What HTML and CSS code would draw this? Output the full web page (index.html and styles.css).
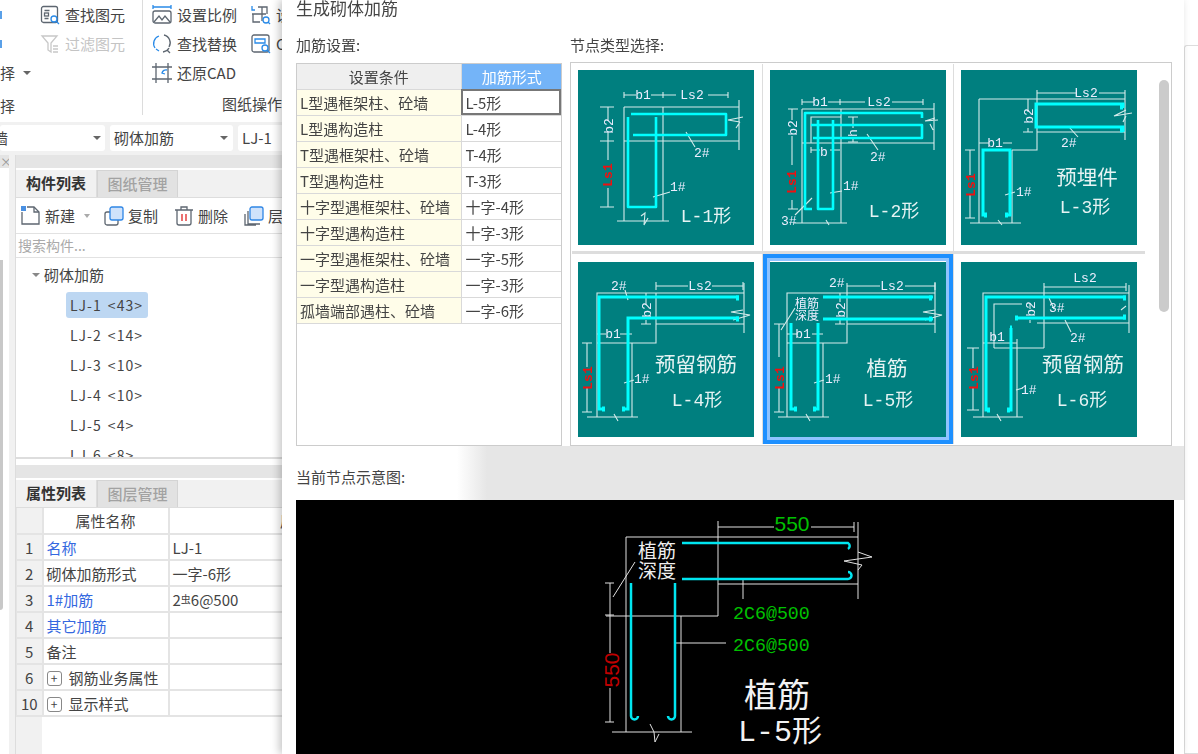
FILE: index.html
```html
<!DOCTYPE html>
<html lang="zh">
<head>
<meta charset="utf-8">
<title>生成砌体加筋</title>
<link rel="stylesheet" href="styles.css">
</head>
<body>
<div class="page">
  <aside class="app">
    <div class="ribbon">
      <div class="rib-edge">
        <div class="rib-row"><span class="edge-mark"></span></div>
        <div class="rib-row"><span class="edge-mark"></span></div>
        <div class="rib-row">择<span class="caret rib-caret"></span></div>
        <div class="rib-group-label left">择</div>
      </div>
      <div class="rib-find">
        <div class="rib-row">
          <svg class="ico" viewBox="0 0 20 20"><rect class="i-g" x="1.500" y="1.500" width="16" height="16" rx="2"/><path class="i-g" d="M4.500 5.500h5M4.500 13.500h4"/><rect class="i-g" x="4.500" y="8" width="4" height="3"/><circle class="i-b" cx="14" cy="14" r="3"/><path class="i-b" d="M16 16l3 3"/></svg>
          <span>查找图元</span>
        </div>
        <div class="rib-row muted">
          <svg class="ico" viewBox="0 0 20 20"><path class="i-l" d="M2 2h15l-6 7v9l-3-2V9z"/><path class="i-l" d="M13 12h5M13 15h5M13 18h5"/></svg>
          <span>过滤图元</span>
        </div>
      </div>
      <div class="rib-cad">
        <div class="rib-cols">
          <div class="rib-col3">
            <div class="rib-row">
              <svg class="ico" viewBox="0 0 20 20"><path class="i-b" d="M1 2h18M1 0v4M19 0v4"/><rect class="i-g" x="1" y="6" width="18" height="12" rx="2"/><path class="i-g" d="M2 17l5-6 3 4 3-4 5 6"/></svg>
              <span>设置比例</span>
            </div>
            <div class="rib-row">
              <svg class="ico" viewBox="0 0 20 20"><path class="i-b" d="M3 14a8 8 0 0 1 4-12M4 15l3 2"/><path class="i-g" d="M12 1a8 8 0 0 1 5 12M11 18a8 8 0 0 0 6-4M15 16l3 3"/></svg>
              <span>查找替换</span>
            </div>
            <div class="rib-row">
              <svg class="ico" viewBox="0 0 20 20"><path class="i-g" d="M0 4h20M0 16h20M4 0v20M16 0v20"/><path class="i-b" d="M15 7a4 4 0 0 0-5 3l3 1"/></svg>
              <span>还原CAD</span>
            </div>
          </div>
          <div class="rib-col4">
            <div class="rib-row">
              <svg class="ico" viewBox="0 0 20 20"><path class="i-b" d="M1 1v4h3"/><path class="i-g" d="M7 2h9v7M11 2v14M1 9h14M2 9v8h7"/><circle class="i-b" cx="15" cy="15" r="3"/><path class="i-b" d="M17 17l2 2"/></svg>
              <span>设置</span>
            </div>
            <div class="rib-row">
              <svg class="ico" viewBox="0 0 20 20"><rect class="i-g" x="1" y="1" width="17" height="17" rx="2"/><path class="i-b" d="M4 5h10v4H4z"/><circle class="i-b" cx="14" cy="14" r="3"/><path class="i-b" d="M16 16l3 3"/></svg>
              <span>CAD</span>
            </div>
          </div>
        </div>
        <div class="rib-group-label">图纸操作</div>
      </div>
    </div>

    <div class="selectors">
      <div class="select sel-a"><span class="sel-cut">墙</span><i class="caret"></i></div>
      <div class="select sel-b"><span>砌体加筋</span><i class="caret"></i></div>
      <div class="select sel-c"><span>LJ-1</span></div>
    </div>

    <div class="workspace">
      <div class="strip">
        <div class="strip-head">×</div>
        <div class="strip-thumb"></div>
      </div>
      <div class="panels">
        <div class="pane-head"></div>
        <div class="tabs">
          <div class="tab active">构件列表</div>
          <div class="tab">图纸管理</div>
        </div>
        <div class="tools">
          <span class="tool">
            <svg class="ico" viewBox="0 0 20 20"><path class="i-g" d="M1 6v12h17V6l-5-5H6"/><path class="i-g" d="M13 1v5h5"/><rect class="i-fill" x="0" y="0" width="5" height="5"/></svg>新建<i class="caret tool-caret"></i>
          </span>
          <span class="tool">
            <svg class="ico" viewBox="0 0 20 20"><rect class="i-g" x="1" y="6" width="13" height="13" rx="2"/><rect class="i-box" x="6" y="1" width="13" height="13" rx="2"/></svg>复制
          </span>
          <span class="tool">
            <svg class="ico" viewBox="0 0 20 20"><path class="i-g" d="M1 4h18M7 4V1h6v3M3 4v13a2 2 0 0 0 2 2h10a2 2 0 0 0 2-2V4"/><path class="i-r" d="M8 8v7M12 8v7"/></svg>删除
          </span>
          <span class="tool">
            <svg class="ico" viewBox="0 0 20 20"><path class="i-g" d="M4 5v13h12M1 8v11h11"/><rect class="i-box" x="6" y="1" width="13" height="13" rx="2"/></svg>层
          </span>
        </div>
        <div class="search">搜索构件...</div>
        <div class="tree">
          <div class="tree-root"><i class="caret tree-caret"></i>砌体加筋</div>
          <div class="tree-item selected">LJ-1 &lt;43&gt;</div>
          <div class="tree-item">LJ-2 &lt;14&gt;</div>
          <div class="tree-item">LJ-3 &lt;10&gt;</div>
          <div class="tree-item">LJ-4 &lt;10&gt;</div>
          <div class="tree-item">LJ-5 &lt;4&gt;</div>
          <div class="tree-item">LJ-6 &lt;8&gt;</div>
        </div>
        <div class="pane-head second"></div>
        <div class="tabs">
          <div class="tab active">属性列表</div>
          <div class="tab">图层管理</div>
        </div>
        <div class="props-wrap">
          <table class="props">
            <colgroup><col class="c-n"><col class="c-k"><col class="c-v"></colgroup>
            <tr><th class="num"></th><th>属性名称</th><th>属性值</th></tr>
            <tr><td class="num">1</td><td class="link">名称</td><td>LJ-1</td></tr>
            <tr><td class="num">2</td><td>砌体加筋形式</td><td>一字-6形</td></tr>
            <tr><td class="num">3</td><td class="link">1#加筋</td><td>2<span class="steel">虫</span>6@500</td></tr>
            <tr><td class="num">4</td><td class="link">其它加筋</td><td></td></tr>
            <tr><td class="num">5</td><td>备注</td><td></td></tr>
            <tr><td class="num">6</td><td><span class="plus">+</span>钢筋业务属性</td><td></td></tr>
            <tr><td class="num">10</td><td><span class="plus">+</span>显示样式</td><td></td></tr>
          </table>
        </div>
      </div>
    </div>
  </aside>

  <main class="dialog">
    <div class="dlg-title">生成砌体加筋</div>
    <div class="dlg-top">
      <section class="cfg">
        <div class="label">加筋设置:</div>
        <div class="cfg-box">
          <table class="cfg-table">
            <colgroup><col class="c-cond"><col class="c-form"></colgroup>
            <tr><th>设置条件</th><th class="hl">加筋形式</th></tr>
            <tr><td>L型遇框架柱、砼墙</td><td class="cur">L-5形</td></tr>
            <tr><td>L型遇构造柱</td><td>L-4形</td></tr>
            <tr><td>T型遇框架柱、砼墙</td><td>T-4形</td></tr>
            <tr><td>T型遇构造柱</td><td>T-3形</td></tr>
            <tr><td>十字型遇框架柱、砼墙</td><td>十字-4形</td></tr>
            <tr><td>十字型遇构造柱</td><td>十字-3形</td></tr>
            <tr><td>一字型遇框架柱、砼墙</td><td>一字-5形</td></tr>
            <tr><td>一字型遇构造柱</td><td>一字-3形</td></tr>
            <tr><td>孤墙端部遇柱、砼墙</td><td>一字-6形</td></tr>
          </table>
        </div>
      </section>
      <section class="nodes">
        <div class="label node-label">节点类型选择:</div>
        <div class="node-box">
          <div class="node-grid">
            <div class="cell">
              <svg class="dg" viewBox="0 0 176 175">
                <path class="w" d="M46 37H161M46 71H161M46 37V151M85 37V151M161 30V80M39 151H91M162 52L150 50L165 47M162 52L158 58"/>
                <path class="w" d="M46 22V28M85 22V28M150 22V28M46 25H58M73 25H98M130 25H150M22 37H36M22 71H36M22 137H36M30 37V50M30 62V90M30 118V137"/>
                <path class="w" d="M63 146L67 143L66 155L70 148M75 127L92 122M108 62L117 77"/>
                <path class="c" d="M53 44H148V65H55M78 47V137H50V47"/>
                <text class="t" x="65" y="29" text-anchor="middle">b1</text><text class="t" x="114" y="29" text-anchor="middle">Ls2</text>
                <text class="t" x="92" y="121">1#</text><text class="t" x="116" y="87">2#</text>
                <text class="t" transform="translate(35 56) rotate(-90)" text-anchor="middle">b2</text>
                <text class="t red" transform="translate(34 105) rotate(-90)" text-anchor="middle">Ls1</text>
                <text class="cap" x="128" y="152" text-anchor="middle">L-1形</text>
              </svg>
            </div>
            <div class="cell">
              <svg class="dg" viewBox="0 0 176 175">
                <path class="w" d="M32 39H164M32 39V153M71 39V153M32 73H164M164 33V80M24 153H77M41 73V47H71M165 48L155 51L168 50M160 54L163 60"/>
                <path class="w" d="M32 29V35M70 29V35M153 29V35M32 32H44M58 32H95M122 32H153M18 39H28M22 39V50M22 66V95M22 130V139M18 139H28M78 47H88M78 72H88M83 47V58M83 68V72M41 77V83M41 80H50M60 80H70"/>
                <path class="w" d="M97 64L108 80M60 123L72 121M42 128L25 145M56 150L59 155"/>
                <path class="c" d="M42 139H35V43H152V48M41 55H152V68H43M48 50V139H63V50"/>
                <text class="t" x="50" y="36" text-anchor="middle">b1</text><text class="t" x="109" y="36" text-anchor="middle">Ls2</text>
                <text class="t" x="54" y="86" text-anchor="middle">b</text>
                <text class="t" x="73" y="120">1#</text><text class="t" x="100" y="91">2#</text><text class="t" x="11" y="155">3#</text>
                <text class="t" transform="translate(27 58) rotate(-90)" text-anchor="middle">b2</text>
                <text class="t" transform="translate(87 63) rotate(-90)" text-anchor="middle">h</text>
                <text class="t red" transform="translate(26 112) rotate(-90)" text-anchor="middle">Ls1</text>
                <text class="cap" x="124" y="147" text-anchor="middle">L-2形</text>
              </svg>
            </div>
            <div class="cell">
              <svg class="dg" viewBox="0 0 176 175">
                <path class="w" d="M18 29H164M18 29V153M51 80V153M51 80H76V62H164M76 20V62M164 20V70M9 153H60"/>
                <path class="w" d="M76 23H115M138 23H164M67 29V42M67 58V62M62 62H72M18 73H28M42 73H51M9 80V105M9 125V148M4 80H14M4 148H14M108 57L117 67M44 125L54 122M165 40L153 46L171 43M165 46L162 52M37 150L41 155"/>
                <path class="c1" d="M162 38V34H75V57H162V62M25 145H22V80H49V145H45"/>
                <path class="d" d="M159 37h3M159 60h3M23 145h3M44 145h3"/>
                <text class="t" x="34" y="77" text-anchor="middle">b1</text><text class="t" x="125" y="27" text-anchor="middle">Ls2</text>
                <text class="t" x="100" y="77">2#</text><text class="t" x="55" y="126">1#</text>
                <text class="t" transform="translate(72 46) rotate(-90)" text-anchor="middle">b2</text>
                <text class="t red" transform="translate(14 115) rotate(-90)" text-anchor="middle">Ls1</text>
                <text class="capz" x="126" y="115" text-anchor="middle">预埋件</text>
                <text class="cap" x="124" y="143" text-anchor="middle">L-3形</text>
              </svg>
            </div>
            <div class="cell">
              <svg class="dg" viewBox="0 0 176 175">
                <path class="w" d="M19 155V31H166M166 21V71M54 81V155M19 81H78V62H166M78 31V62M9 155H60"/>
                <path class="w" d="M78 24H110M134 24H165M78 20V28M165 20V28M68 31V42M68 58V62M63 62H73M19 72H28M42 72H54M9 81V105M9 125V150M4 81H14M4 150H14M46 121L56 118M47 28L50 38M165 48L153 50L172 53L155 58M36 152L40 159"/>
                <path class="c1" d="M161 35H21V147H25M161 56H50V147H46"/>
                <path class="d" d="M158 36h3M158 57h3M24 147h3M44 147h3"/>
                <text class="t" x="35" y="76" text-anchor="middle">b1</text><text class="t" x="122" y="28" text-anchor="middle">Ls2</text>
                <text class="t" x="33" y="28">2#</text><text class="t" x="56" y="121">1#</text>
                <text class="t" transform="translate(73 48) rotate(-90)" text-anchor="middle">b2</text>
                <text class="t red" transform="translate(14 116) rotate(-90)" text-anchor="middle">Ls1</text>
                <text class="capz" x="118" y="110" text-anchor="middle">预留钢筋</text>
                <text class="cap" x="119" y="144" text-anchor="middle">L-4形</text>
              </svg>
            </div>
            <div class="cell selected">
              <svg class="dg" viewBox="0 0 176 175">
                <path class="w" d="M17 155V31H165M165 21V71M53 81V155M17 81H77V62H165M77 21V81M8 155H59"/>
                <path class="w" d="M77 24H110M135 24H165M165 20V28M70 31V40M70 56V62M65 62H75M17 72H28M42 72H53M9 62V95M9 125V150M4 62H14M4 150H14M25 46L11 68M44 121L54 118M165 48L153 50L172 53L155 58M36 152L40 159"/>
                <path class="c1" d="M53 35H163M53 57H163M21 61V147H25M48 61V147H44"/>
                <path class="d" d="M159 36h3M159 57h3M24 147h3M43 147h3"/>
                <text class="t" x="33" y="76" text-anchor="middle">b1</text><text class="t" x="122" y="28" text-anchor="middle">Ls2</text>
                <text class="t" x="59" y="25">2#</text><text class="t" x="55" y="121">1#</text>
                <text class="t" transform="translate(75 48) rotate(-90)" text-anchor="middle">b2</text>
                <text class="t red" transform="translate(14 116) rotate(-90)" text-anchor="middle">Ls1</text>
                <text class="note" x="37" y="46" text-anchor="middle">植筋</text>
                <text class="note" x="37" y="58" text-anchor="middle">深度</text>
                <text class="capz" x="117" y="114" text-anchor="middle">植筋</text>
                <text class="cap" x="118" y="144" text-anchor="middle">L-5形</text>
              </svg>
            </div>
            <div class="cell">
              <svg class="dg" viewBox="0 0 176 175">
                <path class="w" d="M22 155V31H168M168 23V71M56 77V155M22 81H56M33 86H83M83 21V86M61 42H33V86M76 61H168M12 155H62"/>
                <path class="w" d="M83 25H165M165 21V29M69 42V47M69 58V61M12 86V106M12 126V148M6 86H18M6 148H18M88 36L93 47M104 58L110 70M55 128L62 126M165 44L160 48M36 152L40 159"/>
                <path class="c1" d="M165 35H25V148H28M55 56H165M50 66V148H47"/>
                <path class="d" d="M162 36h3M162 55h3M54 56h3M26 148h3M46 148h3M49 66h2"/>
                <text class="t" x="36" y="79" text-anchor="middle">b1</text><text class="t" x="124" y="20" text-anchor="middle">Ls2</text>
                <text class="t" x="88" y="50">3#</text><text class="t" x="109" y="80">2#</text><text class="t" x="60" y="132">1#</text>
                <text class="t" transform="translate(74 47) rotate(-90)" text-anchor="middle">b2</text>
                <text class="t red" transform="translate(17 116) rotate(-90)" text-anchor="middle">Ls1</text>
                <text class="capz" x="122" y="110" text-anchor="middle">预留钢筋</text>
                <text class="cap" x="121" y="144" text-anchor="middle">L-6形</text>
              </svg>
            </div>
          </div>
          <div class="node-scroll"><div class="node-thumb"></div></div>
        </div>
      </section>
    </div>
    <div class="current-band">当前节点示意图:</div>
    <svg class="preview" viewBox="0 0 878 254">
      <path class="pw" d="M330 232V37H562M562 22V99M422 21V116M310 116H422M422 84H562M385 116V232M316 232H396M447 79V99M380 143H430"/>
      <path class="pw" d="M422 27H478M515 27H558M558 22V32M314 83V153M314 188V222M309 83H318M309 222H318M309 115H318M339 62L317 97M562 52L576 57L548 61L566 65L562 70M354 224L358 232L359 242L363 234"/>
      <path class="pc" d="M386 43H552A3.500 3.500 0 0 1 552 49M386 79H552A3.500 3.500 0 0 0 552 72M335 83V216A3.500 3.500 0 0 0 342 216M379 83V216A3.500 3.500 0 0 1 372 216"/>
      <text class="pg" x="496" y="31" text-anchor="middle">550</text>
      <text class="pg mono" x="437" y="119">2C6@500</text>
      <text class="pg mono" x="437" y="151">2C6@500</text>
      <text class="pr" transform="translate(323 170) rotate(-90)" text-anchor="middle">550</text>
      <text class="pnote" x="361" y="58" text-anchor="middle">植筋</text>
      <text class="pnote" x="361" y="78" text-anchor="middle">深度</text>
      <text class="pcap" x="481" y="207" text-anchor="middle">植筋</text>
      <text class="pcap2" x="484" y="241" text-anchor="middle">L-5形</text>
    </svg>
  </main>
  <aside class="peek"></aside>
</div>
</body>
</html>
```
FILE: styles.css
```css
* { box-sizing: border-box; }
html, body { margin: 0; height: 100%; overflow: hidden; }
body {
  font-family: "Noto Sans CJK SC", "Noto Sans", sans-serif;
  font-size: 15px;
  color: #444;
  background: #fff;
}
.page { display: flex; width: 1198px; height: 754px; filter: blur(0.35px); }

/* left application */
.app { width: 282px; flex: none; display: flex; flex-direction: column; overflow: hidden; background: #f1f1f1; }
.ribbon { height: 122px; flex: none; display: flex; background: #fff; }
.rib-row { height: 29px; display: flex; align-items: center; gap: 5px; white-space: nowrap; }
.rib-edge { width: 40px; flex: none; }
.edge-mark { width: 3px; height: 8px; background: #5aa0e8; margin-left: -1px; }
.rib-edge .rib-row { gap: 0; }
.rib-caret { margin-left: 8px; }
.rib-group-label { height: 26px; margin-top: 4px; line-height: 26px; text-align: right; white-space: nowrap; }
.rib-group-label.left { text-align: left; margin-top: 6px; }
.rib-find { width: 103px; flex: none; height: 115px; border-right: 1px solid #dcdcdc; }
.muted { color: #c4c4c4; }
.rib-cad { flex: 1; min-width: 0; padding-left: 9px; }
.rib-cols { display: flex; }
.rib-col3 { width: 99px; flex: none; }
.rib-col4 { flex: 1; min-width: 0; overflow: hidden; }
.ico { width: 20px; height: 20px; flex: none; overflow: visible; }
.i-g, .i-b, .i-l, .i-r, .i-box { fill: none; stroke-width: 1.300; }
.i-g { stroke: #5d6670; }
.i-b { stroke: #2a8be8; }
.i-l { stroke: #c8c8c8; }
.i-r { stroke: #e02525; }
.i-box { stroke: #2f86e5; fill: #cfe2fb; }
.i-fill { fill: #4a90e2; }

.selectors { height: 31px; flex: none; display: flex; gap: 5px; align-items: center; background: #f1f1f1; }
.select { height: 26px; background: #fff; border-radius: 3px; display: flex; align-items: center; justify-content: space-between; padding: 0 4px; flex: none; white-space: nowrap; overflow: hidden; }
.sel-a { width: 105px; }
.sel-cut { margin-left: -11px; }
.sel-b { width: 123px; padding-right: 5px; }
.sel-c { width: 60px; }
.caret { display: inline-block; width: 0; height: 0; border-left: 4px solid transparent; border-right: 4px solid transparent; border-top: 4px solid #666; }

.workspace { flex: 1; min-height: 0; display: flex; gap: 6px; padding-top: 2px; }
.strip { width: 9px; flex: none; background: #fff; }
.strip-head { height: 13px; background: #e4e4e4; color: #999; font-size: 12px; line-height: 13px; overflow: hidden; }
.strip-thumb { width: 3px; height: 350px; margin-top: 92px; background: #c8c8c8; border-radius: 0 0 3px 0; }
.panels { flex: 1; min-width: 0; display: flex; flex-direction: column; background: #fff; border-left: 1px solid #ddd; }
.pane-head { height: 13px; flex: none; background: #e5e5e5; }
.pane-head.second { margin-top: 6px; }
.tabs { height: 28px; margin-top: 2px; flex: none; display: flex; background: #f1f1f1; border-bottom: 1px solid #ddd; }
.tab { width: 81px; flex: none; text-align: center; line-height: 26px; background: #e2e2e2; color: #a2a2a2; border: 1px solid #d4d4d4; border-bottom: 0; font-weight: 500; }
.tab.active { background: #f1f1f1; color: #333; border: 0; border-right: 1px solid #ddd; font-weight: 700; }
.tools { height: 35px; flex: none; display: flex; align-items: center; gap: 16px; padding-left: 5px; white-space: nowrap; }
.tool { display: inline-flex; align-items: center; gap: 4px; }
.tool-caret { margin: 0 -2px 0 5px; border-left-width: 3px; border-right-width: 3px; border-top-color: #aaa; }
.search { height: 25px; flex: none; padding-left: 2px; line-height: 22px; color: #aaa; border-top: 1px solid #e2e2e2; border-bottom: 1px solid #e2e2e2; font-size: 14px; }
.tree { height: 201px; flex: none; overflow: hidden; border-bottom: 2px solid #ddd; padding-top: 3px; }
.tree-root { height: 27px; line-height: 27px; padding-left: 16px; display: flex; align-items: center; gap: 4px; }
.tree-caret { border-top-color: #888; }
.tree-item { height: 26px; margin: 4px 0 4px 50px; width: 82px; padding-left: 4px; line-height: 26px; border-radius: 3px; font-size: 14px; letter-spacing: 1px; word-spacing: 2px; white-space: nowrap; }
.tree-item.selected { background: #bdd7f2; }
.props-wrap { flex: 1; min-height: 0; overflow: hidden; background: linear-gradient(90deg, #f1f1f1 26px, #fff 26px); }
.props { border-collapse: collapse; table-layout: fixed; width: 420px; }
.c-n { width: 26px; } .c-k { width: 126px; } .c-v { width: 268px; }
.props th, .props td { height: 26px; padding: 0 3px; border: 2px solid #e4e4e4; border-left-width: 1px; font-weight: 400; white-space: nowrap; overflow: hidden; }
.props tr:first-child th { border-top: 0; text-align: center; }
.props .num { background: #f1f1f1; text-align: center; padding: 0; }
.props .link { color: #3468e0; }
.steel { font-size: 10px; vertical-align: 3px; }
.plus { display: inline-block; width: 15px; height: 15px; margin-right: 7px; line-height: 12px; text-align: center; font-size: 12px; border: 1px solid #888; border-radius: 3px; vertical-align: 1px; }

/* dialog */
.dialog { width: 902px; flex: none; background: #fff; box-shadow: -3px 0 8px rgba(0,0,0,.22); position: relative; display: flex; flex-direction: column; overflow: hidden; }
.dlg-title { height: 16px; padding-left: 14px; line-height: 16px; font-size: 17px; flex: none; }
.dlg-top { display: flex; gap: 8px; padding-left: 14px; height: 430px; flex: none; }
.cfg { width: 266px; flex: none; }
.label { height: 47px; padding-top: 19px; line-height: 20px; font-size: 15px; }
.node-label { height: 46px; }
.cfg-box { height: 383px; border: 1px solid #ccc; background: #fff; }
.cfg-table { border-collapse: collapse; table-layout: fixed; width: 264px; }
.c-cond { width: 164px; } .c-form { width: 100px; }
.cfg-table th, .cfg-table td { height: 26px; padding: 0 3px; border: 1px solid #d9d9d9; font-weight: 400; white-space: nowrap; }
.cfg-table th { height: 25px; background: #efefef; border-top: 0; text-align: center; }
.cfg-table th.hl { background: #74b4f8; color: #fff; }
.cfg-table tr > :first-child { border-left: 0; }
.cfg-table tr > :last-child { border-right: 0; padding-left: 4px; }
.cfg-table td:first-child { background: #fffde9; }
.cfg-table td.cur { outline: 2px solid #777; outline-offset: -2px; }
.nodes { width: 602px; flex: none; }
.node-box { height: 384px; border: 1px solid #ccc; display: flex; padding: 1px; }
.node-grid { width: 573px; flex: none; height: 380px; display: grid; grid-template-columns: 190px 190px 191px; grid-template-rows: 187px 190px; gap: 3px 1px; background: #ddd; }
.cell { background: #fff; padding: 6px 0 0 7px; }
.cell:nth-child(3n+1) { padding-left: 6px; }
.cell:nth-child(n+4) { padding-top: 8px; }
.cell.selected { padding: 4px 0 0 3px; border: 4px solid #1e90ff; box-shadow: inset 0 0 0 3px #8fc3ff; }
.dg { width: 176px; height: 175px; background: #007f7f; display: block; }
.dg .w { fill: none; stroke: #d6ecec; stroke-width: 1.100; }
.dg .c { fill: none; stroke: #00ffff; stroke-width: 2.600; stroke-linejoin: round; }
.dg .c1 { fill: none; stroke: #00ffff; stroke-width: 3; }
.dg .d { fill: none; stroke: #00ffff; stroke-width: 5; }
.dg .t { fill: #eef; font: 13px "Liberation Mono", monospace; }
.dg .t.red { fill: #f01010; font-weight: 700; }
.dg .cap { fill: #e6f3f3; font: 18px "Liberation Mono", "Noto Sans CJK SC", monospace; }
.dg .capz { fill: #e6f3f3; font: 20.500px "Noto Sans CJK SC", sans-serif; }
.dg .note { fill: #eef; font: 12px "Noto Sans CJK SC", sans-serif; }
.node-scroll { flex: 1; background: #fff; }
.node-thumb { width: 10px; height: 232px; margin: 16px 0 0 14px; background: #cbcbcb; border-radius: 5px; }
.current-band { height: 54px; flex: none; padding: 21px 0 0 14px; line-height: 20px; font-size: 15px; background: linear-gradient(90deg, #fff 175px, #e6e6e6 205px); }
.preview { width: 878px; height: 254px; margin-left: 14px; flex: none; background: #000; display: block; }
.pw { fill: none; stroke: #e0e0e0; stroke-width: 1; }
.pc { fill: none; stroke: #00e5f0; stroke-width: 2.500; }
.pg { fill: #00c000; font: 21px "Liberation Sans", sans-serif; }
.pg.mono { font: 18.300px "Liberation Mono", monospace; }
.pr { fill: #c00000; font: 21px "Liberation Sans", sans-serif; }
.pnote { fill: #eee; font: 19px "Noto Sans CJK SC", sans-serif; }
.pcap { fill: #f2f2f2; font: 33px "Noto Sans CJK SC", sans-serif; }
.pcap2 { fill: #f2f2f2; font: 30px "Liberation Mono", "Noto Sans CJK SC", monospace; }

.peek { flex: 1; margin-top: 45px; background: #fff; border: 1px solid #ddd; border-right: 0; border-radius: 3px 0 0 0; }
```
